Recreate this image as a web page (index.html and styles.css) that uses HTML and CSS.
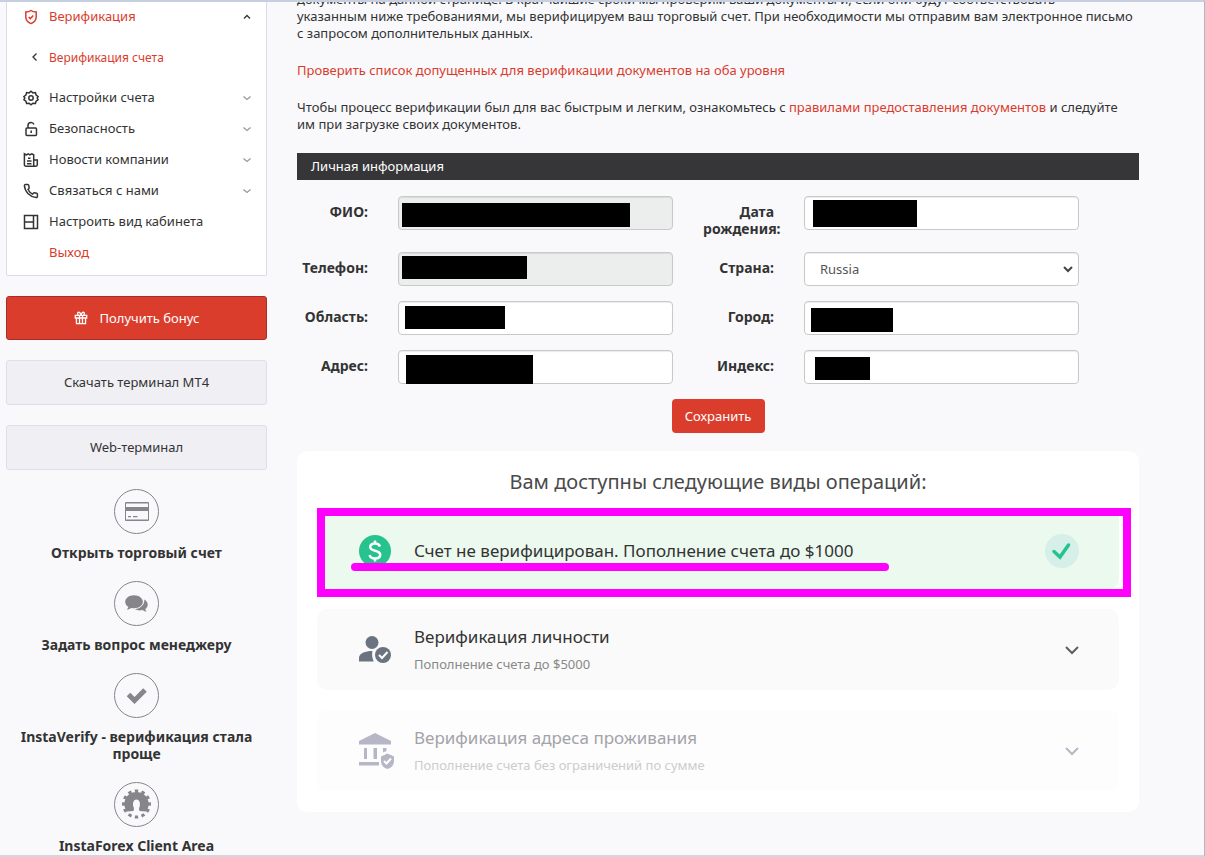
FILE: index.html
```html
<!DOCTYPE html>
<html lang="ru">

<head>
    <meta charset="utf-8">
    <meta name="viewport" content="width=device-width, initial-scale=1.0">
    <title>Верификация счета</title>
    <link rel="stylesheet" href="styles.css">
</head>

<body>
    <div class="window">
        <aside class="sidebar">
            <nav class="menu">
                <a href="#" class="menu-item active">
                    <svg class="icon" viewBox="0 0 16 16"><path d="M8 1.5C6.5 2.6 4.5 2.9 2.8 2.9v5.2c0 3.2 2.4 5.4 5.2 6.5 2.8-1.1 5.2-3.3 5.2-6.5V2.9C11.5 2.9 9.5 2.6 8 1.5z"/><path d="M5.7 8l1.6 1.6 3-3.200"/></svg>
                    <span>Верификация</span>
                    <svg class="arrow dark" viewBox="0 0 10 10"><path d="M2 6.500l3-3 3 3"/></svg>
                </a>
                <a href="#" class="menu-item sub">
                    <svg class="back" viewBox="0 0 10 10"><path d="M6.500 1.500l-3.500 3.500 3.500 3.500"/></svg>
                    <span>Верификация счета</span>
                </a>
                <a href="#" class="menu-item">
                    <svg class="icon" viewBox="0 0 16 16"><circle cx="8" cy="8" r="2.200"/><path d="M8 1.200l1.900 1.700 2.500-.3.700 2.400 2 1.500L14.200 8l.9 1.700-2 1.500-.7 2.300-2.500-.3L8 14.800l-1.900-1.600-2.500.3-.7-2.300-2-1.500L1.800 8 .9 6.500l2-1.500.7-2.400 2.500.3z"/></svg>
                    <span>Настройки счета</span>
                    <svg class="arrow" viewBox="0 0 10 10"><path d="M1.500 3.500l3.500 3 3.500-3"/></svg>
                </a>
                <a href="#" class="menu-item">
                    <svg class="icon" viewBox="0 0 16 16"><rect x="3" y="7" width="10.500" height="7.500" rx="1"/><path d="M5 7V4.500C5 2.800 6.300 1.600 8 1.600c1.400 0 2.500.8 2.900 2M8.200 9.500v2.500"/></svg>
                    <span>Безопасность</span>
                    <svg class="arrow" viewBox="0 0 10 10"><path d="M1.500 3.500l3.500 3 3.500-3"/></svg>
                </a>
                <a href="#" class="menu-item">
                    <svg class="icon" viewBox="0 0 16 16"><path d="M13 14.300H3c-1 0-1.600-.7-1.600-1.600V1.800l2 1 1.800-1 1.700 1 1.800-1 2 1V12.700c0 1 .5 1.600 1.300 1.600h.6c1 0 1.700-.7 1.700-1.600V8h-3.500M4 11.700h4.500M4 9h4.500M5 6.300h2.500"/></svg>
                    <span>Новости компании</span>
                    <svg class="arrow" viewBox="0 0 10 10"><path d="M1.500 3.500l3.500 3 3.500-3"/></svg>
                </a>
                <a href="#" class="menu-item">
                    <svg class="icon" viewBox="0 0 16 16"><path d="M4.600 1.500H2.500c-.7 0-1.200.6-1.100 1.300.6 6.300 5.500 11.200 11.700 11.800.7.100 1.300-.4 1.300-1.100v-2.200c0-.5-.4-1-.9-1.100l-2-.4c-.5-.1-.9.1-1.200.5l-.7.800C7.500 10.100 6 8.500 5 6.500l.8-.8c.3-.3.400-.7.300-1.100L5.800 2.400c-.1-.5-.6-.9-1.200-.9z"/></svg>
                    <span>Связаться с нами</span>
                    <svg class="arrow" viewBox="0 0 10 10"><path d="M1.500 3.500l3.500 3 3.500-3"/></svg>
                </a>
                <a href="#" class="menu-item">
                    <svg class="icon" viewBox="0 0 16 16"><path d="M1.500 1.500h13v13h-13zM10.500 1.500v13M1.500 8h9"/></svg>
                    <span>Настроить вид кабинета</span>
                </a>
                <a href="#" class="menu-item active exit"><span>Выход</span></a>
            </nav>

            <button type="button" class="side-button bonus">
                <svg class="gift" viewBox="0 0 16 16"><path d="M1.500 5h13v3h-13zM2.800 8h10.400v6.500H2.800zM6.300 5v9.500M9.700 5v9.500M8 4.500C7.500 2 6 1 4.800 1.600 3.700 2.200 4.200 4 5 4.800M8 4.500C8.500 2 10 1 11.200 1.600c1.100.6.600 2.400-.2 3.200"/></svg>
                Получить бонус
            </button>
            <button type="button" class="side-button">Скачать терминал MT4</button>
            <button type="button" class="side-button">Web-терминал</button>

            <div class="links">
                <a href="#" class="round-link">
                    <svg viewBox="0 0 45 45"><circle class="ring" cx="22.500" cy="22.500" r="22"/><path fill-rule="evenodd" d="M12 13h22a1 1 0 0 1 1 1v17a1 1 0 0 1-1 1H12a1 1 0 0 1-1-1V14a1 1 0 0 1 1-1zm0 1.500V18h22v-3.500zM12 22v8.500h22V22zM14 27h3v1.300h-3zM19 27h4.500v1.300H19z"/></svg>
                    Открыть торговый счет
                </a>
                <a href="#" class="round-link">
                    <svg viewBox="0 0 45 45"><circle class="ring" cx="22.500" cy="22.500" r="22"/><path d="M20 14.200c-5 0-8.800 2.900-8.800 6.600 0 2.200 1.300 4 3.200 5.200-.2 1-.8 1.800-1.600 2.600 1.900-.1 3.400-.8 4.500-1.600.9.200 1.800.3 2.700.3 5 0 8.900-2.900 8.900-6.500 0-3.700-3.900-6.600-8.900-6.600z"/><path d="M30.300 18.500c.5 5.300-3.800 9-9.500 9.800 2.300 1.200 5.400 1.500 7.700.7 1 .8 2.300 1.600 4 1.700-.8-.8-1.200-1.700-1.300-2.600 3.500-2.200 3.500-7.300-.9-9.600z"/></svg>
                    Задать вопрос менеджеру
                </a>
                <a href="#" class="round-link">
                    <svg viewBox="0 0 45 45"><circle class="ring" cx="22.500" cy="22.500" r="22"/><path class="bold-check" d="M14.500 21.500l6 6L31 17"/></svg>
                    InstaVerify - верификация стала проще
                </a>
                <a href="#" class="round-link">
                    <svg viewBox="0 0 45 45"><circle class="ring" cx="22.500" cy="22.500" r="22"/><circle class="teeth" cx="22.500" cy="22" r="13" pathLength="24"/><path d="M22.500 10A12 12 0 0 0 13 29.500l6.500-.5c.6-1.800.6-3-.2-4.500-.9-4 .5-7 3.200-7s4.100 3 3.200 7c-.8 1.500-.8 2.700-.2 4.500l6.500.5A12 12 0 0 0 22.500 10z"/></svg>
                    InstaForex Client Area
                </a>
            </div>
        </aside>

        <main class="content">
            <p>документы на данной странице. В кратчайшие сроки мы проверим ваши документы и, если они будут соответствовать<br>
                указанным ниже требованиями, мы верифицируем ваш торговый счет. При необходимости мы отправим вам электронное письмо<br>
                с запросом дополнительных данных.</p>
            <p><a href="#">Проверить список допущенных для верификации документов на оба уровня</a></p>
            <p>Чтобы процесс верификации был для вас быстрым и легким, ознакомьтесь с <a href="#">правилами предоставления документов</a> и следуйте<br>
                им при загрузке своих документов.</p>

            <h2 class="bar">Личная информация</h2>

            <form class="info">
                <label for="name">ФИО:</label>
                <div class="field"><input type="text" id="name" disabled><span class="mask mask-name"></span></div>
                <label for="birth">Дата рождения:</label>
                <div class="field"><input type="text" id="birth"><span class="mask mask-birth"></span></div>
                <label for="phone">Телефон:</label>
                <div class="field"><input type="text" id="phone" disabled><span class="mask mask-phone"></span></div>
                <label for="country">Страна:</label>
                <div class="field">
                    <select id="country"><option>Russia</option></select>
                    <svg class="select-arrow" viewBox="0 0 10 10"><path d="M1 3l4 4 4-4"/></svg>
                </div>
                <label for="region">Область:</label>
                <div class="field"><input type="text" id="region"><span class="mask mask-region"></span></div>
                <label for="city">Город:</label>
                <div class="field"><input type="text" id="city"><span class="mask mask-city"></span></div>
                <label for="address">Адрес:</label>
                <div class="field"><input type="text" id="address"><span class="mask mask-address"></span></div>
                <label for="zip">Индекс:</label>
                <div class="field"><input type="text" id="zip"><span class="mask mask-zip"></span></div>
                <button type="submit" class="save">Сохранить</button>
            </form>

            <section class="operations">
                <h3>Вам доступны следующие виды операций:</h3>
                <div class="step done">
                    <svg class="step-icon" viewBox="0 -2 36 36"><circle cx="16" cy="16" r="16" fill="#27c28d"/><path class="dollar" d="M21 11.500C20.300 9.300 18.500 8.500 16 8.500c-2.800 0-4.800 1.200-4.800 3.500 0 5 10 2.500 10 7.800 0 2.400-2.200 3.700-5.200 3.700-2.900 0-4.900-1.200-5.400-3.500M16 5.500v3M16 23.500v3"/></svg>
                    <h4>Счет не верифицирован. Пополнение счета до $1000</h4>
                    <svg class="done-mark" viewBox="0 0 34 34"><circle cx="17" cy="17" r="17" fill="#d6efe9"/><path d="M9 17.500l6 5.500 8.500-12"/></svg>
                    <span class="highlight-line"></span>
                </div>
                <div class="step">
                    <svg class="step-icon" viewBox="0 -2 36 36"><circle cx="13" cy="8.500" r="6.500"/><path d="M0 27.500v-3.300C0 19.500 6 17 13.500 17c-.5 1.800-.8 6 1.300 10.500z"/><circle cx="24" cy="21" r="8"/><path class="cut" d="M20 21l3 3 5.500-6"/></svg>
                    <div>
                        <h4>Верификация личности</h4>
                        <p>Пополнение счета до $5000</p>
                    </div>
                    <svg class="chevron" viewBox="0 0 14 14"><path d="M1 4l6 6 6-6"/></svg>
                </div>
                <div class="step locked">
                    <svg class="step-icon" viewBox="0 0 36 36"><path d="M16 0l16 8v3.500H0V8zM5 15h3v11H5zM14.500 15h3.500v11h-3.500zM24 15h3.500v3L24 19.500zM0 29h20v3.500H0zM28.500 20.500l6.500 3v4.500c0 4-2.500 7-6.500 8-4-1-6.500-4-6.500-8v-4.500z"/><path class="cut" d="M25 28l2.500 2.500 4.500-5"/></svg>
                    <div>
                        <h4>Верификация адреса проживания</h4>
                        <p>Пополнение счета без ограничений по сумме</p>
                    </div>
                    <svg class="chevron" viewBox="0 0 14 14"><path d="M1 4l6 6 6-6"/></svg>
                </div>
            </section>
        </main>
    </div>
</body>

</html>
```
FILE: styles.css
```css
* {
    box-sizing: border-box;
}

body {
    margin: 0;
    background-color: #f9f9fc;
    color: #333;
    font-family: "Noto Sans", sans-serif;
    font-size: 13px;
    line-height: 17px;
}

a {
    color: #da3c2c;
    text-decoration: none;
}

h2,
h3,
h4,
p {
    margin: 0;
    font-weight: normal;
}

svg {
    flex: none;
    fill: none;
}

button,
input,
select {
    font: inherit;
    color: inherit;
}

.window {
    display: flex;
    gap: 30px;
    height: 100vh;
    overflow: hidden;
    padding: 0 65px 0 6px;
    border-top: 2px solid #c6d0e0;
    border-right: 1px solid #b4b6c6;
    border-bottom: 2px solid #d5d6da;
}

/* sidebar */

.sidebar {
    flex: none;
    width: 261px;
}

.menu {
    margin-top: -1px;
    padding-bottom: 7px;
    background-color: #fff;
    border: 1px solid #dcdce9;
    border-top: 0;
    border-radius: 0 0 2px 2px;
}

.menu-item {
    display: flex;
    align-items: center;
    gap: 10px;
    height: 31px;
    padding: 0 14px 0 16px;
    color: #333;
}

.menu-item.active,
.menu-item.sub {
    color: #da3c2c;
}

.menu-item.sub {
    height: 50px;
    padding-left: 23px;
    font-size: 12px;
}

.menu-item.exit {
    padding-left: 42px;
}

.icon {
    width: 16px;
    height: 16px;
    stroke: currentColor;
    stroke-width: 1.5;
}

.arrow,
.back {
    width: 10px;
    height: 10px;
    stroke: #999;
    stroke-width: 1.3;
}

.arrow {
    margin-left: auto;
}

.arrow.dark,
.back {
    stroke: #333;
}

.back {
    margin-right: -1px;
}

.side-button {
    display: flex;
    align-items: center;
    justify-content: center;
    gap: 12px;
    width: 100%;
    height: 45px;
    margin-top: 20px;
    background-color: #efeff4;
    border: 1px solid #dfdfec;
    border-radius: 3px;
    font-size: 13px;
}

.side-button.bonus {
    height: 44px;
    background-color: #db3d2d;
    border-color: #a52e27;
    color: #fff;
}

.gift {
    width: 14px;
    height: 14px;
    stroke: #fff;
    stroke-width: 1.5;
}

.links {
    display: flex;
    flex-direction: column;
    gap: 20px;
    margin-top: 19px;
}

.round-link {
    display: flex;
    flex-direction: column;
    align-items: center;
    gap: 10px;
    padding: 0 10px;
    color: #333;
    font-size: 14px;
    font-weight: bold;
    text-align: center;
}

.round-link svg {
    width: 45px;
    height: 45px;
    fill: #85858a;
}

.round-link .ring {
    fill: none;
    stroke: #85858a;
}

.round-link .bold-check {
    fill: none;
    stroke: #85858a;
    stroke-width: 5;
}

.round-link .teeth {
    fill: none;
    stroke: #85858a;
    stroke-width: 3;
    stroke-dasharray: 1 1;
    stroke-dashoffset: 0.5;
}

/* content */

.content {
    flex: 1;
    min-width: 0;
    margin-top: -11px;
}

.content > p {
    margin-bottom: 20px;
    white-space: nowrap;
}

.bar {
    padding: 5px 14px;
    background-color: #363638;
    color: #fff;
    font-size: 13px;
    line-height: 17px;
}

.info {
    display: grid;
    grid-template-columns: 71px minmax(0, 1fr) 71px minmax(0, 1fr);
    gap: 15px 30px;
    margin-top: 16px;
    padding-right: 60px;
}

.info label {
    padding-top: 7px;
    font-size: 14px;
    font-weight: bold;
    text-align: right;
}

.field {
    position: relative;
}

.field input,
.field select {
    display: block;
    width: 100%;
    height: 34px;
    padding: 0 15px;
    background-color: #fff;
    border: 1px solid #c9c9c9;
    border-radius: 4px;
    box-shadow: inset 0 1px 1px rgba(0, 0, 0, 0.08);
    color: #555;
}

.field select {
    appearance: none;
}

.field input:disabled {
    background-color: #eceeed;
}

.select-arrow {
    position: absolute;
    top: 12px;
    right: 6px;
    width: 10px;
    height: 10px;
    stroke: #444;
    stroke-width: 2;
    pointer-events: none;
}

/* hidden personal data */

.mask {
    position: absolute;
    background-color: #000;
}

.mask-name {
    top: 7px;
    left: 4px;
    width: 228px;
    height: 24px;
}

.mask-birth {
    top: 4px;
    left: 9px;
    width: 104px;
    height: 27px;
}

.mask-phone {
    top: 4px;
    left: 4px;
    width: 125px;
    height: 23px;
}

.mask-region {
    top: 5px;
    left: 7px;
    width: 100px;
    height: 23px;
}

.mask-city {
    top: 7px;
    left: 7px;
    width: 82px;
    height: 24px;
}

.mask-address {
    top: 5px;
    left: 8px;
    width: 127px;
    height: 29px;
}

.mask-zip {
    top: 7px;
    left: 11px;
    width: 55px;
    height: 23px;
}

.save {
    grid-column: 1 / -1;
    justify-self: center;
    width: 93px;
    height: 34px;
    margin-right: -60px;
    padding: 0;
    background-color: #db3d2d;
    border: 0;
    border-radius: 4px;
    color: #fff;
}

.operations {
    display: flex;
    flex-direction: column;
    gap: 20px;
    margin-top: 18px;
    padding: 20px 20px 21px;
    background-color: #fff;
    border-radius: 10px;
}

.operations h3 {
    margin-bottom: -5px;
    color: #4a4a4a;
    font-size: 20px;
    line-height: 22px;
    text-align: center;
}

.step {
    position: relative;
    display: flex;
    align-items: center;
    gap: 19px;
    height: 81px;
    padding: 0 40px 0 42px;
    background-color: #fafafa;
    border-radius: 10px;
}

.step h4 {
    font-size: 17px;
    line-height: 24px;
}

.step p {
    margin-top: 5px;
    color: #888;
    line-height: 20px;
}

.step-icon {
    width: 36px;
    height: 36px;
    fill: #6b7280;
}

.step-icon .cut,
.step-icon .dollar {
    fill: none;
    stroke: #fff;
    stroke-width: 2;
}

.step-icon .dollar {
    stroke-width: 2.5;
}

.chevron {
    width: 14px;
    height: 14px;
    margin-left: auto;
    stroke: #5b6067;
    stroke-width: 2;
}

.step.done {
    padding-top: 4px;
    background-color: #ebf9ef;
}

.done-mark {
    width: 34px;
    height: 34px;
    margin-left: auto;
}

.done-mark path {
    stroke: #27c28d;
    stroke-width: 3.5;
    stroke-linecap: round;
}

.step.locked {
    background-color: #fdfdfd;
}

.step.locked .step-icon {
    fill: #b6b6c6;
}

.step.locked h4 {
    color: #a3a3a9;
}

.step.locked p {
    color: #ccc;
}

.step.locked .chevron {
    stroke: #b6b6c6;
}

/* marker drawn over the current step */

.step.done::after {
    content: "";
    position: absolute;
    top: 0;
    right: -12px;
    bottom: -8px;
    left: 0;
    border: 8px solid #f0f;
}

.highlight-line {
    position: absolute;
    top: 55px;
    left: 34px;
    width: 538px;
    height: 8px;
    background-color: #f0f;
    border-radius: 4px;
}
```
